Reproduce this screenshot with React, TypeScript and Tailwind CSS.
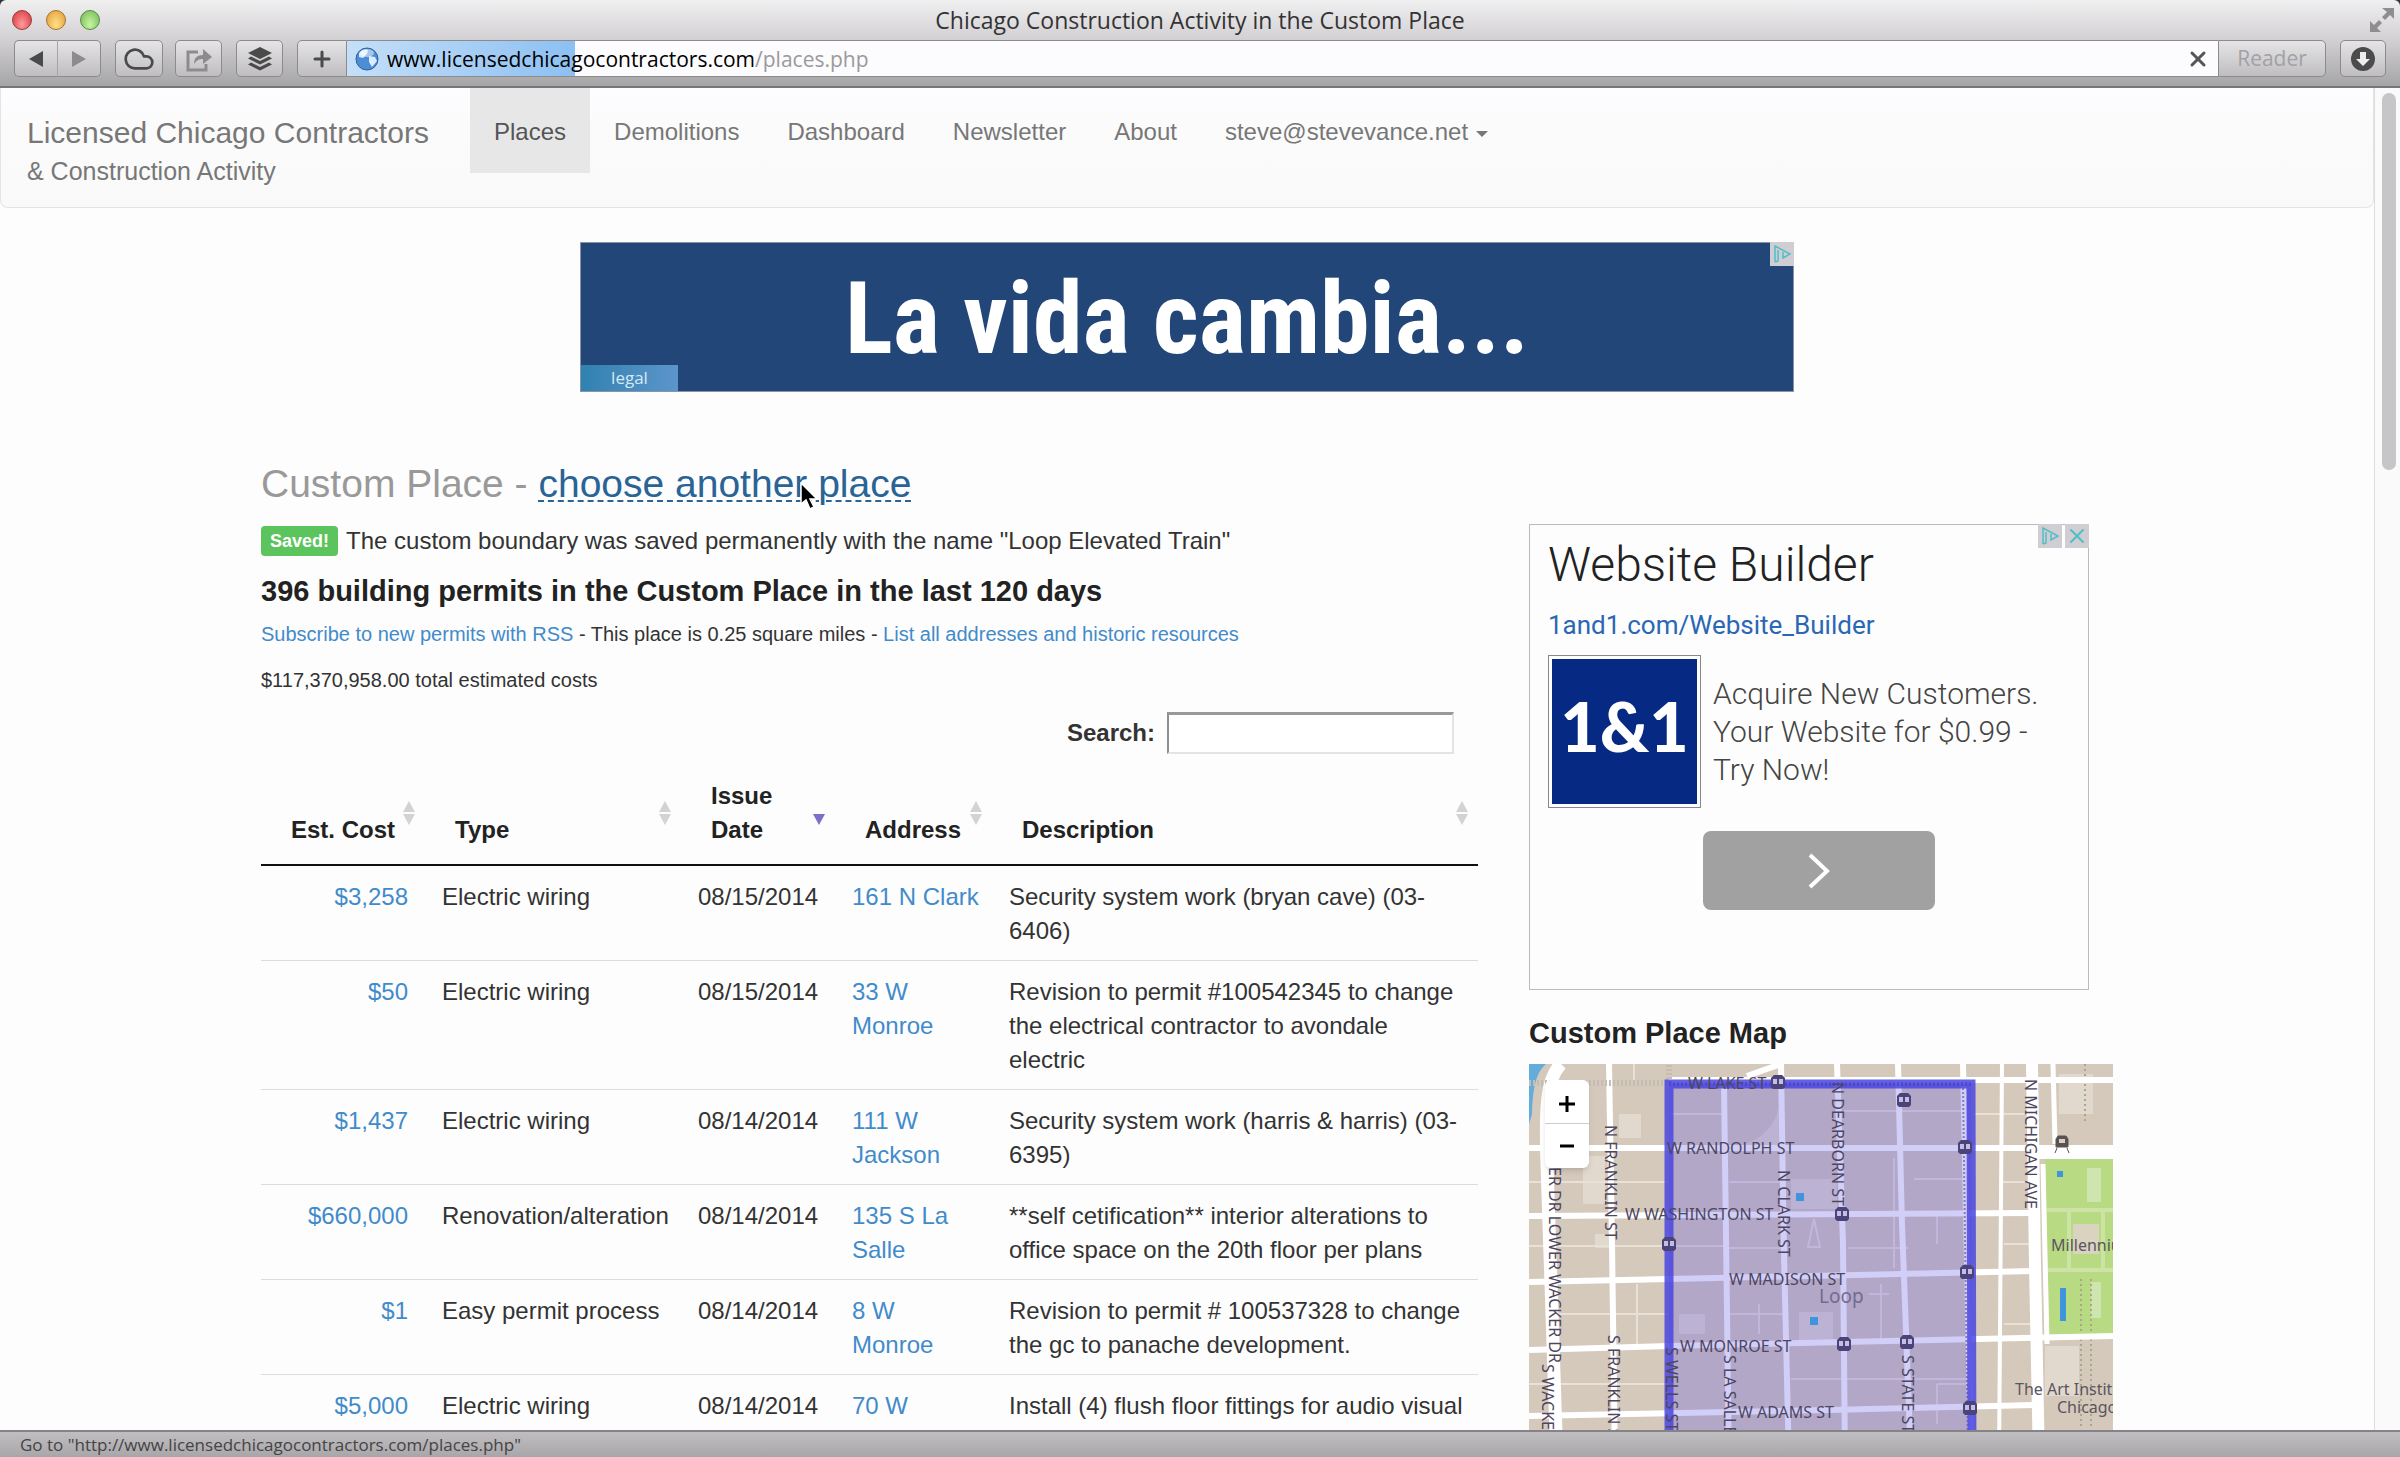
import React, { useState } from 'react';
import { Cloud, Plus, X } from 'lucide-react';

const NAV_ITEMS = ['Places', 'Demolitions', 'Dashboard', 'Newsletter', 'About'];

const PERMITS = [
    { cost: '$3,258', type: 'Electric wiring', date: '08/15/2014', address: '161 N Clark', description: 'Security system work (bryan cave) (03-6406)' },
    { cost: '$50', type: 'Electric wiring', date: '08/15/2014', address: '33 W Monroe', description: 'Revision to permit #100542345 to change the electrical contractor to avondale electric' },
    { cost: '$1,437', type: 'Electric wiring', date: '08/14/2014', address: '111 W Jackson', description: 'Security system work (harris & harris) (03-6395)' },
    { cost: '$660,000', type: 'Renovation/alteration', date: '08/14/2014', address: '135 S La Salle', description: '**self cetification** interior alterations to office space on the 20th floor per plans' },
    { cost: '$1', type: 'Easy permit process', date: '08/14/2014', address: '8 W Monroe', description: 'Revision to permit # 100537328 to change the gc to panache development.' },
    { cost: '$5,000', type: 'Electric wiring', date: '08/14/2014', address: '70 W Madison', description: 'Install (4) flush floor fittings for audio visual' },
];

const COLUMNS = [
    { label: 'Est. Cost', sort: 'both', className: 'w-[164px] text-center whitespace-nowrap' },
    { label: 'Type', sort: 'both', className: 'w-[256px] text-left' },
    { label: 'Issue Date', sort: 'desc', className: 'w-[154px] text-left' },
    { label: 'Address', sort: 'both', className: 'w-[157px] text-left' },
    { label: 'Description', sort: 'both', className: 'text-left' },
];

const STATIONS = [
    [249, 18], [375, 36], [436, 83], [313, 150], [140, 180],
    [438, 208], [315, 280], [378, 278], [441, 344],
];

// x, y, text, rotated
const STREET_LABELS: [number, number, string, boolean][] = [
    [159, 25, 'W LAKE ST', false],
    [138, 90, 'W RANDOLPH ST', false],
    [96, 156, 'W WASHINGTON ST', false],
    [200, 221, 'W MADISON ST', false],
    [151, 288, 'W MONROE ST', false],
    [209, 354, 'W ADAMS ST', false],
    [20, 103, 'ER DR LOWER WACKER DR', true],
    [13, 300, 'S WACKER DR', true],
    [76, 61, 'N FRANKLIN ST', true],
    [79, 271, 'S FRANKLIN ST', true],
    [137, 283, 'S WELLS ST', true],
    [195, 291, 'S LA SALLE ST', true],
    [249, 106, 'N CLARK ST', true],
    [303, 18, 'N DEARBORN ST', true],
    [373, 291, 'S STATE ST', true],
    [496, 15, 'N MICHIGAN AVE', true],
];

function BrowserChrome() {
    const button = 'flex h-full items-center justify-center rounded-[5px] border border-[#8b8b8b] bg-linear-to-b from-[#e6e5e6] to-[#bfbdc0] text-[#4a4a4a]';

    return (
        <header className="flex h-[88px] shrink-0 flex-col rounded-t-md border-b-2 border-[#77757a] bg-linear-to-b from-[#f1f0f1] via-[#cfcdd0] to-[#a5a4a7] font-['Open_Sans',sans-serif]">
            <div className="relative flex h-10 items-center justify-center">
                <div className="absolute left-3 flex gap-3.5">
                    <span className="size-5 rounded-full border border-[#9c3a3c] bg-radial-[at_50%_75%] from-[#ff9c9c] to-[#d3303a]" />
                    <span className="size-5 rounded-full border border-[#a5722b] bg-radial-[at_50%_75%] from-[#ffe08c] to-[#e39a2e]" />
                    <span className="size-5 rounded-full border border-[#5c8a45] bg-radial-[at_50%_75%] from-[#c8f5a5] to-[#6cb84c]" />
                </div>
                <h1 className="text-[23px] leading-8 text-[#333]">Chicago Construction Activity in the Custom Place</h1>
                <svg className="absolute right-1.5 size-6 text-[#8f8d90]" viewBox="0 0 24 24" fill="currentColor">
                    <path d="M12 0h12v11l-4-4-5 5-3-3 5-5zM0 13l4 4 5-5 3 3-5 5 4 4H0z" />
                </svg>
            </div>

            <div className="flex h-[37px] items-center px-3.5">
                <div className="mr-3.5 flex h-full w-[87px]">
                    <button aria-label="Back" className={`${button} w-1/2 rounded-r-none border-r-[#a5a5a5]`}>
                        <svg className="h-4 w-4" viewBox="0 0 16 16" fill="currentColor"><path d="M15 0v16L1 8z" /></svg>
                    </button>
                    <button aria-label="Forward" className={`${button} w-1/2 rounded-l-none border-l-0`}>
                        <svg className="h-4 w-4 text-[#8d8b8e]" viewBox="0 0 16 16" fill="currentColor"><path d="M1 0v16l14-8z" /></svg>
                    </button>
                </div>
                <button aria-label="iCloud tabs" className={`${button} mr-3 w-12`}>
                    <Cloud className="h-8 w-8" strokeWidth={2} />
                </button>
                <button aria-label="Share" className={`${button} mr-3.5 w-[47px]`}>
                    <svg className="size-7 text-[#8d8b8e]" viewBox="0 0 28 28" fill="none" stroke="currentColor" strokeWidth="3">
                        <path d="M13 7H3v18h18v-6" />
                        <path d="M9 19c0-6 3-9 9-9V4l9 8-9 7v-5c-4 0-6 1-9 5z" fill="currentColor" stroke="none" />
                    </svg>
                </button>
                <button aria-label="Reading stack" className={`${button} mr-3.5 w-[47px]`}>
                    <svg className="size-6" viewBox="0 0 24 24" fill="currentColor">
                        <path d="M12 0l12 6-12 6L0 6zM3 9.500l9 4.500 9-4.500 3 2-12 6-12-6zM3 15.500l9 4.500 9-4.500 3 2-12 6-12-6z" />
                    </svg>
                </button>
                <button aria-label="Add bookmark" className={`${button} w-[50px] rounded-r-none`}>
                    <Plus className="size-6" strokeWidth={3} />
                </button>
                <div className="relative flex h-full flex-1 items-center border-y border-[#8b8b8b] bg-[#fcfbfd]">
                    <div className="absolute inset-y-0 left-0 w-[228px] bg-linear-to-r from-[#c5dff8] to-[#8cc0f2]" />
                    <svg className="relative ml-2 size-6" viewBox="0 0 24 24">
                        <circle cx="12" cy="12" r="11" fill="#4b8ed6" stroke="#2f5f9c" />
                        <path d="M4 6c3-4 7-4 9-3l-1 4-4 4-4-1zM14 9l6 1 2 4-5 6-3-5z" fill="#dcecff" />
                        <ellipse cx="12" cy="6" rx="7" ry="4" fill="#fff" opacity="0.5" />
                    </svg>
                    <p className="relative ml-2 text-[21px] leading-8 text-black">
                        www.licensedchicagocontractors.com<span className="text-[#9a9a9a]">/places.php</span>
                    </p>
                    <button aria-label="Stop loading" className="relative mr-2 ml-auto text-[#555]">
                        <X className="size-6" strokeWidth={3} />
                    </button>
                </div>
                <button className={`${button} mr-3.5 w-[108px] rounded-l-none text-[21px] text-[#a3a1a5]`}>Reader</button>
                <button aria-label="Downloads" className={`${button} w-[46px]`}>
                    <svg className="size-6" viewBox="0 0 24 24">
                        <circle cx="12" cy="12" r="12" fill="#4c4c4c" />
                        <path d="M9 5h6v7h4l-7 7-7-7h4z" fill="#eee" />
                    </svg>
                </button>
            </div>
        </header>
    );
}

function Navbar() {
    return (
        <nav className="flex h-[120px] rounded-b-lg border border-t-0 border-[#e4e4e4] bg-linear-to-b from-[#fdfcfe] to-[#f8f9f8] text-[#777]">
            <a href="#" className="w-[469px] pt-6 pl-[26px]">
                <span className="block text-[30px] leading-[42px]">Licensed Chicago Contractors</span>
                <span className="block text-[25px] leading-[34px]">&amp; Construction Activity</span>
            </a>
            <ul className="flex h-[85px] text-[24px]">
                {NAV_ITEMS.map((item) => (
                    <li key={item}>
                        <a
                            href="#"
                            className={`flex h-full items-center px-6 pt-0.5 ${item === 'Places' ? 'bg-[#e7e7e8] text-[#555]' : ''}`}
                        >
                            {item}
                        </a>
                    </li>
                ))}
                <li>
                    <a href="#" className="flex h-full items-center gap-2 px-6 pt-0.5">
                        steve@stevevance.net
                        <svg className="mt-1 h-1.5 w-3" viewBox="0 0 12 6" fill="currentColor"><path d="M0 0h12L6 6z" /></svg>
                    </a>
                </li>
            </ul>
        </nav>
    );
}

function AdChoices() {
    return (
        <span className="flex size-6 items-center justify-center bg-[#d0ced2]">
            <svg className="size-5" viewBox="0 0 20 20" fill="none" stroke="#4fbfc6" strokeWidth="1.500">
                <path d="M3 18V2l15 8-7 4V8M3 18l3-1V6" />
            </svg>
        </span>
    );
}

function SortIcon({ sort }: { sort: string }) {
    return (
        <svg className="absolute top-1/2 right-2.5 h-6 w-3 -translate-y-1/2" viewBox="0 0 12 24">
            {sort === 'both' && <path d="M6 0l6 11H0zM0 13h12L6 24z" fill="#d3d3d3" />}
            {sort === 'desc' && <path d="M0 13h12L6 24z" fill="#7d6fc9" />}
        </svg>
    );
}

function PermitTable() {
    return (
        <table className="mt-2 w-full table-fixed border-collapse text-[24px] leading-[34px] text-[#333]">
            <thead>
                <tr className="border-b-2 border-[#111]">
                    {COLUMNS.map((col) => (
                        <th key={col.label} scope="col" className={`relative px-[30px] py-[17px] align-bottom font-bold text-[#222] ${col.className}`}>
                            {col.label}
                            <SortIcon sort={col.sort} />
                        </th>
                    ))}
                </tr>
            </thead>
            <tbody>
                {PERMITS.map((permit) => (
                    <tr key={permit.cost} className="border-b border-[#ddd] align-top">
                        <td className="pt-3.5 pr-[17px] pb-3 text-right"><a href="#" className="text-[#428bca]">{permit.cost}</a></td>
                        <td className="pt-3.5 pr-3 pb-3 pl-[17px] whitespace-nowrap">{permit.type}</td>
                        <td className="pt-3.5 pr-3 pb-3 pl-[17px]">{permit.date}</td>
                        <td className="pt-3.5 pr-3 pb-3 pl-[17px]"><a href="#" className="text-[#428bca]">{permit.address}</a></td>
                        <td className="pt-3.5 pr-3 pb-3 pl-[17px]">{permit.description}</td>
                    </tr>
                ))}
            </tbody>
        </table>
    );
}

function WebsiteBuilderAd() {
    return (
        <aside className="relative h-[466px] w-[560px] border border-[#bbb] bg-[#fdfdfd] px-[18px] pt-3 font-[Roboto,sans-serif]">
            <div className="absolute -top-px -right-px flex gap-[3px]">
                <AdChoices />
                <button aria-label="Close ad" className="flex size-6 items-center justify-center bg-[#d0ced2] text-[#4fbfc6]">
                    <X className="size-6" strokeWidth={2} />
                </button>
            </div>
            <h2 className="text-[48px] leading-[56px] font-light text-[#222]">Website Builder</h2>
            <a href="#" className="mt-3.5 block text-[26px] leading-9 text-[#2a67b4]">1and1.com/Website_Builder</a>
            <div className="mt-3 flex items-center gap-3">
                <div className="size-[153px] border border-[#888] p-[3px]">
                    <div className="flex h-full items-center justify-center bg-[#062a84] pb-3 font-[Lato,sans-serif] text-[68px] font-black text-white">
                        1&amp;1
                    </div>
                </div>
                <p className="w-[345px] text-[30px] leading-[38px] font-light text-[#444]">
                    Acquire New Customers. Your Website for $0.99 - Try Now!
                </p>
            </div>
            <button aria-label="Visit site" className="mt-[23px] ml-[155px] flex h-[79px] w-[232px] items-center justify-center rounded-lg bg-[#a0a1a0]">
                <svg className="h-9 w-6" viewBox="0 0 24 36" fill="none" stroke="#fff" strokeWidth="4">
                    <path d="M3 2l17 16L3 34" />
                </svg>
            </button>
        </aside>
    );
}

function PlaceMap() {
    return (
        <div className="relative mt-3.5 h-[400px] overflow-hidden bg-[#d5c9bc]">
            <svg className="h-full w-full" viewBox="0 0 584 400" preserveAspectRatio="xMinYMin slice" fontFamily="'Noto Sans', sans-serif">
                <rect width="584" height="400" fill="#d5c9bc" />

                {/* Plazas and lighter lots */}
                <g fill="#e2d9ce">
                    <path d="M90 50h22v24H90zM54 92h22v48H54zM66 170h14v14H66zM262 115h46v30h-46zM270 248h34v30h-34zM150 250h26v20h-26zM205 84c30-8 44-24 46-50v50z" />
                    <path d="M516 282h34v50h-34zM530 10h34v40h-34z" />
                </g>
                <g stroke="#e9e0d8" strokeWidth="2" fill="none">
                    <path d="M0 118h80M86 118h54M0 182h140M30 250h110M0 320h140M105 0v16M108 220v60M140 50h55M200 118h52M200 250h58M315 47h120M145 182h50M200 184h52M319 184h60M385 115h50M262 315h175M365 94v110M352 220v60M408 150v30M408 320v40M408 320h30M230 240v30M445 50h55M475 180h30M470 118h34M475 260h30M285 155l6 28h-12zM340 230h20" />
                </g>

                {/* River */}
                <path d="M0 0h17C8 8 4 20 3 50L0 60z" fill="#64addb" />

                {/* Millennium Park */}
                <path d="M516 95h68v175h-64z" fill="#b7da82" />
                <path d="M558 104h14v34h-14zM562 218h10v36h-10z" fill="#cfe5b0" />
                <path d="M544 160h26v30h-26z" fill="#d9d3c0" />
                <path d="M518 146h66M518 206h66M540 146v62M574 146v62" stroke="#cde3a5" strokeWidth="4" fill="none" />
                <path d="M552 215v150M562 215v150M556 0v60" stroke="#a7a88a" strokeWidth="2" strokeDasharray="2 3" fill="none" />

                {/* Street grid */}
                <g stroke="#fff" fill="none" strokeWidth="6">
                    <path d="M32 0C18 14 16 40 18 100L28 400" strokeWidth="13" />
                    <path d="M80 0l3 180 3 220M195 20l5 380M252 0l3 190 5 210M308 0l6 180 2 220M369 0l4 160 9 240M434 0l8 400" />
                    <path d="M473 0l-3 400" strokeWidth="4" />
                    <path d="M503 0l3 200 4 200" strokeWidth="12" />
                    <path d="M524 0l2 80M514 100l4 180" strokeWidth="5" />
                    <path d="M0 84h584M0 152l500-3M0 218l140-3 370-8M0 286l140-4 444-10M0 352l300-6 210-5M252 0l-34 12M140 16h444" />
                    <path d="M505 88h79" strokeWidth="14" />
                    <path d="M0 19h140V0" stroke="#c3bdb4" strokeWidth="6" strokeDasharray="2 2" />
                    <path d="M434 20l5 380" stroke="#9a92a4" strokeWidth="2" strokeDasharray="2 2" />
                </g>

                <path d="M140 410V20h302l1 390z" fill="#5a50e6" fillOpacity="0.28" stroke="#4a45e0" strokeOpacity="0.85" strokeWidth="9" />
                <path d="M140 20h302" stroke="#3f3bc0" strokeWidth="4" strokeDasharray="2 2" opacity="0.5" />

                <g fill="#3f95dc">
                    <path d="M267 129h8v8h-8zM281 253h8v8h-8zM528 107h6v6h-6zM531 224h6v33h-6z" />
                </g>

                {/* Transit stops */}
                {STATIONS.map(([x, y]) => (
                    <g key={`${x}-${y}`} transform={`translate(${x - 7} ${y - 7})`}>
                        <path d="M3 0h8l3 3v9l-2 2H2l-2-2V3z" fill="#4a4478" />
                        <path d="M2 4h4v5H2zM8 4h4v5H8z" fill="#c5bde6" />
                    </g>
                ))}
                <path d="M529 72h8l2 3v8h-12v-8zM528 84l-2 5M538 84l2 5" fill="#5a5250" stroke="#5a5250" strokeWidth="1" />
                <path d="M530 75h6v4h-6z" fill="#d8d0c8" />

                <g fontSize="16" fill="#4d4660">
                    {STREET_LABELS.map(([x, y, label, rotated]) => (
                        <text key={label} transform={rotated ? `translate(${x} ${y}) rotate(90)` : `translate(${x} ${y})`}>{label}</text>
                    ))}
                </g>
                <g fill="#5c5560">
                    <text x="290" y="239" fontSize="19" fill="#736b90">Loop</text>
                    <text x="522" y="187" fontSize="16">Millennium</text>
                    <text x="486" y="331" fontSize="16">The Art Institute</text>
                    <text x="528" y="349" fontSize="16">Chicago</text>
                </g>
            </svg>
            <div className="absolute top-4 left-4 flex w-11 flex-col rounded-md bg-white font-bold text-black shadow-md">
                <button aria-label="Zoom in" className="flex h-11 items-center justify-center border-b border-[#ccc] pt-1">
                    <svg className="size-4" viewBox="0 0 16 16" stroke="currentColor" strokeWidth="3"><path d="M0 8h16M8 0v16" /></svg>
                </button>
                <button aria-label="Zoom out" className="flex h-11 items-center justify-center">
                    <svg className="h-4 w-3.5" viewBox="0 0 14 16" stroke="currentColor" strokeWidth="3"><path d="M0 8h14" /></svg>
                </button>
            </div>
        </div>
    );
}

export default function App() {
    const [query, setQuery] = useState('');

    return (
        <div className="flex h-screen flex-col overflow-hidden bg-[#333] font-['Liberation_Sans',Arial,sans-serif]">
            <BrowserChrome />

            <div className="flex min-h-0 flex-1 overflow-hidden bg-[#fdfdfd]">
                <div className="min-w-0 flex-1">
                    <Navbar />

                    {/* Leaderboard ad */}
                    <div className="relative mx-auto mt-[34px] flex h-[150px] w-[1214px] items-center justify-center border border-[#8a93a8] bg-[#234679]">
                        <p className="pt-1 font-['Roboto_Condensed','Open_Sans_Condensed',Roboto,sans-serif] text-[100px] leading-[100px] font-bold text-white">La vida cambia...</p>
                        <a href="#" className="absolute bottom-0 left-0 flex h-[26px] w-[97px] items-center justify-center bg-linear-to-r from-[#2f82b0] to-[#5c95cb] font-['Open_Sans',sans-serif] text-[17px] text-[#d5e8f5]">legal</a>
                        <div className="absolute -top-px -right-px"><AdChoices /></div>
                    </div>

                    <main className="mx-auto mt-[70px] grid max-w-[1852px] grid-cols-[1fr_584px] gap-x-[51px]">
                        <section>
                            <h2 className="text-[39px] leading-[44px] text-[#999]">
                                Custom Place -{' '}
                                <a href="#" className="relative text-[#2a6496] underline decoration-dashed decoration-2 underline-offset-3">
                                    choose another place
                                    <svg className="absolute top-5 left-[262px] h-7 w-[18px]" viewBox="0 0 18 28">
                                        <path d="M1 1v21l5-4 4 9 4-2-4-8h7z" fill="#000" stroke="#fff" strokeWidth="1.500" />
                                    </svg>
                                </a>
                            </h2>
                            <p className="mt-[18px] flex items-center gap-2 text-[24px] leading-[34px] text-[#333]">
                                <span className="flex h-[30px] items-center rounded bg-[#5cc45c] px-[9px] text-[18px] font-bold text-white">Saved!</span>
                                The custom boundary was saved permanently with the name "Loop Elevated Train"
                            </p>
                            <h3 className="mt-4 text-[29px] leading-[34px] font-bold text-[#222]">396 building permits in the Custom Place in the last 120 days</h3>
                            <p className="mt-3 text-[20px] leading-7 text-[#333]">
                                <a href="#" className="text-[#428bca]">Subscribe to new permits with RSS</a> - This place is 0.25 square miles -{' '}
                                <a href="#" className="text-[#428bca]">List all addresses and historic resources</a>
                            </p>
                            <p className="mt-[18px] text-[20px] leading-7 text-[#333]">$117,370,958.00 total estimated costs</p>
                            <div className="mt-[18px] flex items-center justify-end gap-3 pr-6">
                                <label htmlFor="permit-search" className="text-[24px] leading-[34px] font-bold text-[#333]">Search:</label>
                                <input
                                    id="permit-search"
                                    type="search"
                                    value={query}
                                    onChange={(e) => setQuery(e.target.value)}
                                    className="h-[42px] w-[287px] border-2 border-t-[3px] border-[#e4e4e4] border-t-[#999] border-l-[#8f8f8f] bg-white px-2 text-[24px]"
                                />
                            </div>
                            <PermitTable />
                        </section>

                        <section className="pt-[62px]">
                            <WebsiteBuilderAd />
                            <h3 className="mt-[26px] text-[29px] leading-[34px] font-bold text-[#222]">Custom Place Map</h3>
                            <PlaceMap />
                        </section>
                    </main>
                </div>

                {/* Scrollbar */}
                <div className="w-[26px] shrink-0 border-l border-[#ddd] bg-[#fafafa] pt-[5px] pl-[7px]">
                    <div className="h-[377px] w-[14px] rounded-full bg-[#c6c5c8]" />
                </div>
            </div>

            <footer className="flex h-[27px] shrink-0 items-center border-t-2 border-[#858387] bg-linear-to-b from-[#c0bec1] to-[#a9a6aa] pl-5 font-['Open_Sans',sans-serif] text-[17px] text-[#444]">
                Go to "http://www.licensedchicagocontractors.com/places.php"
            </footer>
        </div>
    );
}
